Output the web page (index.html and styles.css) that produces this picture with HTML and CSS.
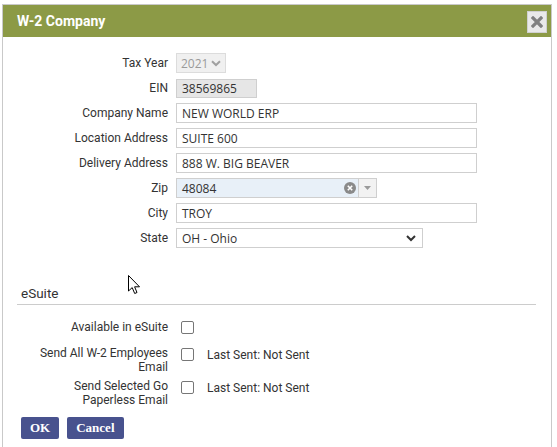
FILE: index.html
```html
<!DOCTYPE html>
<html>
<head>
<meta charset="utf-8">
<link rel="stylesheet" href="styles.css">
</head>
<body>
<div class="dialog">
  <div class="titlebar">
    <span class="title">W-2 Company</span>
    <button class="close" aria-label="Close">
      <svg width="12" height="12" viewBox="0 0 12 12"><path d="M2 2 L10 10 M10 2 L2 10" stroke="#808080" stroke-width="3.2" stroke-linecap="square"/></svg>
    </button>
  </div>
  <div class="body">
    <div class="form">
      <label class="lbl">Tax Year</label>
      <div class="ctl"><div class="select disabled w-year"><span>2021</span>
        <svg class="chev" width="10" height="7" viewBox="0 0 10 7"><path d="M1 1.2 L5 5 L9 1.2" fill="none" stroke="#a0a0a0" stroke-width="2"/></svg></div></div>

      <label class="lbl">EIN</label>
      <div class="ctl"><div class="input readonly w-ein">38569865</div></div>

      <label class="lbl">Company Name</label>
      <div class="ctl"><div class="input w-full">NEW WORLD ERP</div></div>

      <label class="lbl">Location Address</label>
      <div class="ctl"><div class="input w-full">SUITE 600</div></div>

      <label class="lbl">Delivery Address</label>
      <div class="ctl"><div class="input w-full">888 W. BIG BEAVER</div></div>

      <label class="lbl">Zip</label>
      <div class="ctl"><div class="combo w-zip">
        <div class="combo-text">48084
          <svg class="clear" width="12" height="12" viewBox="0 0 12 12"><circle cx="6" cy="6" r="6" fill="#8a8a8a"/><path d="M3.8 3.8 L8.2 8.2 M8.2 3.8 L3.8 8.2" stroke="#fff" stroke-width="1.6"/></svg>
        </div>
        <div class="combo-btn"><svg width="7" height="4" viewBox="0 0 7 4"><path d="M0 0 H7 L3.5 4 Z" fill="#9a9a9a"/></svg></div>
      </div></div>

      <label class="lbl">City</label>
      <div class="ctl"><div class="input w-full">TROY</div></div>

      <label class="lbl">State</label>
      <div class="ctl"><div class="select w-state"><span>OH - Ohio</span>
        <svg class="chev" width="10" height="7" viewBox="0 0 10 7"><path d="M1 1 L5 5 L9 1" fill="none" stroke="#333" stroke-width="2"/></svg></div></div>
    </div>

    <div class="section">eSuite</div>

    <div class="checks">
      <div class="crow first">
        <label class="clbl">Available in eSuite</label>
        <span class="cb"></span>
        <span class="sent"></span>
      </div>
      <div class="crow">
        <label class="clbl">Send All W-2 Employees<br>Email</label>
        <span class="cb"></span>
        <span class="sent">Last Sent: Not Sent</span>
      </div>
      <div class="crow">
        <label class="clbl">Send Selected Go<br>Paperless Email</label>
        <span class="cb"></span>
        <span class="sent">Last Sent: Not Sent</span>
      </div>
    </div>

    <div class="actions">
      <button class="btn">OK</button>
      <button class="btn">Cancel</button>
    </div>
  </div>
</div>
<svg class="cursor" width="13" height="20" viewBox="0 0 13 20"><path d="M0.5 0.5 L0.5 16 L4.2 12.6 L6.7 18.5 L9 17.5 L6.6 11.8 L11.5 11.8 Z" fill="#fff" stroke="#000" stroke-width="1" stroke-linejoin="round"/></svg>
</body>
</html>
```
FILE: styles.css
```css
html, body {
  margin: 0;
  padding: 0;
  background: #fff;
}
body {
  width: 557px;
  height: 447px;
  overflow: hidden;
  position: relative;
  font-family: Roboto, "Liberation Sans", sans-serif;
  font-size: 12px;
  color: #333;
}
.dialog {
  margin: 4px 0 0 2px;
  width: 550px;
  height: 460px;
  box-sizing: border-box;
  border: 1px solid #c9c9c9;
  border-bottom: none;
  background: #fff;
}
.titlebar {
  height: 32px;
  background: #8c9a46;
  display: flex;
  align-items: center;
  justify-content: space-between;
  padding: 0 4px 0 14px;
}
.title {
  color: #fff;
  font-family: Roboto, "Liberation Sans", sans-serif;
  font-weight: 700;
  font-size: 14px;
}
.close {
  width: 20px;
  height: 22px;
  margin-top: 1px;
  padding: 0;
  border: 1px solid #d0d0d0;
  background: #e9e9e9;
  display: flex;
  align-items: center;
  justify-content: center;
}
.form {
  display: grid;
  grid-template-columns: 130px auto;
  column-gap: 8px;
  row-gap: 5px;
  padding: 16px 0 0 35px;
  align-items: center;
}
.lbl {
  text-align: right;
  font-size: 12px;
  line-height: 14px;
  color: #333;
}
.ctl {
  display: flex;
}
.input, .select, .combo {
  height: 20px;
  box-sizing: border-box;
  border: 1px solid #cfcfcf;
  font-family: "Open Sans", "Liberation Sans", sans-serif;
  font-size: 12px;
  color: #333;
  display: flex;
  align-items: center;
  padding: 0 5px;
  background: #fff;
}
.readonly {
  background: #e6e6e6;
  height: 19px;
  margin-top: 1px;
}
.disabled {
  background: #f0f0f0;
  color: #9a9a9a;
  border-color: #dcdcdc;
  padding: 0 4px;
  justify-content: space-between;
}
.select {
  justify-content: space-between;
}
.w-year { width: 50px; }
.w-ein { width: 81px; }
.w-full { width: 301px; }
.w-state { width: 247px; padding-right: 6px; }
.w-zip { width: 201px; padding: 0; }
.combo-text {
  flex: 1;
  height: 100%;
  background: #e8f0f8;
  display: flex;
  align-items: center;
  justify-content: space-between;
  padding: 0 2px 0 5px;
}
.combo-btn {
  width: 17px;
  height: 100%;
  border-left: 1px solid #cfcfcf;
  background: #f2f2f2;
  display: flex;
  align-items: center;
  justify-content: center;
}
.section {
  margin: 37px 15px 0 14px;
  padding: 0 0 3px 4px;
  border-bottom: 1px solid #cccccc;
  font-family: Roboto, "Liberation Sans", sans-serif;
  font-weight: 400;
  font-size: 13.5px;
  line-height: 16px;
  color: #333;
}
.checks {
  display: flex;
  flex-direction: column;
  gap: 5px;
  padding: 15px 0 0 35px;
}
.crow {
  display: grid;
  grid-template-columns: 130px 13px auto;
  column-gap: 13px;
  align-items: start;
}
.crow.first {
  min-height: 21px;
}
.clbl {
  text-align: right;
  line-height: 14px;
  font-size: 12px;
  color: #333;
}
.cb {
  width: 13px;
  height: 13px;
  box-sizing: border-box;
  border: 1px solid #767676;
  border-radius: 2px;
  background: #fff;
  margin-top: 1px;
}
.crow .sent {
  line-height: 14px;
  margin-top: 2px;
  color: #333;
}
.crow:not(.first) .cb {
  margin-top: 2px;
}
.actions {
  display: flex;
  gap: 8px;
  padding: 10px 0 0 18px;
}
.btn {
  height: 22px;
  padding: 0 9px;
  border: none;
  border-radius: 2px;
  background: #48528e;
  color: #fff;
  font-family: "Liberation Serif", serif;
  font-weight: 700;
  font-size: 13px;
}
.cursor {
  position: absolute;
  left: 128px;
  top: 275px;
}
```
